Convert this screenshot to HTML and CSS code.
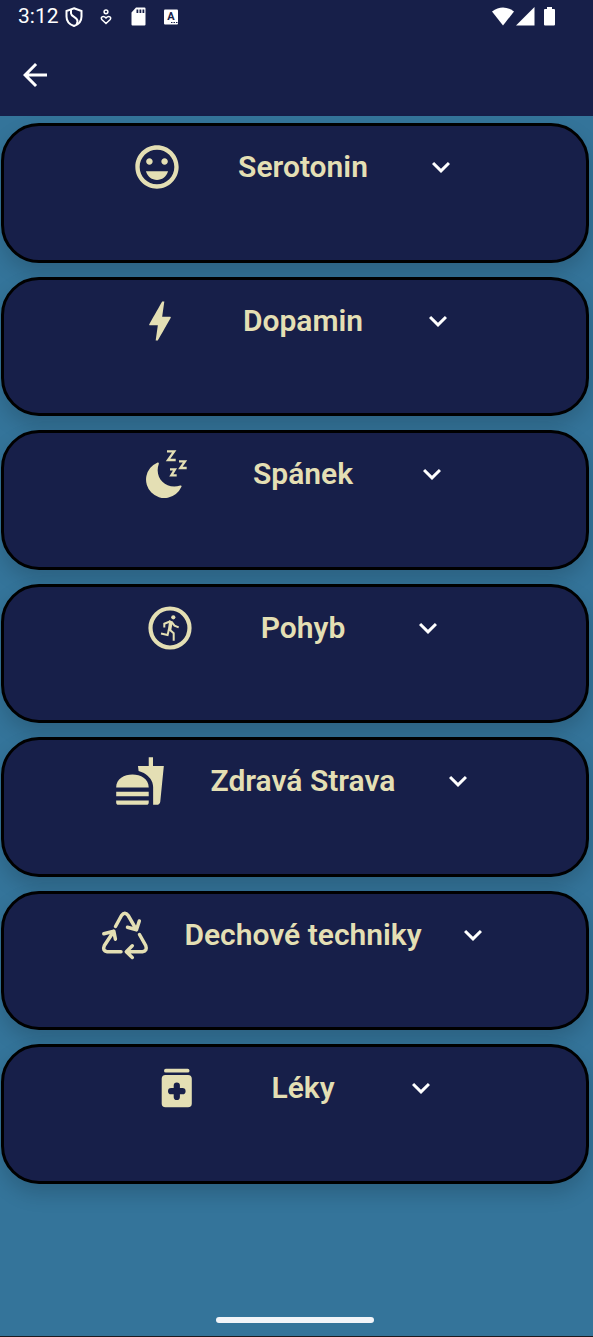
FILE: index.html
```html
<!DOCTYPE html>
<html lang="cs">
<head>
<meta charset="utf-8">
<meta name="viewport" content="width=device-width, initial-scale=1">
<title>Serotonin</title>
<link rel="stylesheet" href="styles.css">
</head>
<body>
<div class="screen">
  <header class="top">
    <div class="status">
      <span class="clock">3:12</span>
      <svg class="status-icon shield" viewBox="0 0 18 20" width="18" height="20" fill="none" stroke="currentColor" stroke-width="2"><path d="M9 1.200 16.500 4v5.500c0 4.500-3 8-7.500 9.500C4.500 17.500 1.500 14 1.500 9.500V4z"/><path d="M6 2.500v4c0 3 6.500 4 6.500 7.500 0 1.500-.5 2.500-1 3.200"/></svg>
      <svg class="status-icon person" viewBox="0 0 12 16" width="12" height="16" fill="none" stroke="currentColor" stroke-width="1.500"><circle cx="6" cy="2.800" r="1.900"/><path d="M6 14.500 1.800 10.500C.2 8.500 2.800 5.800 6 8.900c3.200-3.100 5.800-.4 4.200 1.600z"/></svg>
      <svg class="status-icon card-sd" viewBox="0 0 15 19" width="15" height="19" fill="currentColor"><path fill-rule="evenodd" d="M5 .5h8.500q1 0 1 1v16q0 1-1 1h-12q-1 0-1-1V5.500zM5.500 2.500v3.500h1.800V2.500zM8.500 2.500v3.500h1.800V2.500zM11.500 2.500v3.500h1.800V2.500z"/></svg>
      <svg class="status-icon" viewBox="0 0 14 16" width="14" height="16"><rect y=".5" width="14" height="15" rx="1" fill="currentColor"/><text class="badge-letter" x="7" y="11" text-anchor="middle">A</text><path class="badge-dots" d="M7 13.500h1.500M9.500 13.500h1.500M12 13.500h1.500"/></svg>
      <span class="signals">
        <svg viewBox="0 0 22 19" width="22" height="19" fill="currentColor"><path d="M0 4.500Q11-3.500 22 4.500L11 18.500z"/></svg>
        <svg viewBox="0 0 19 19" width="19" height="19" fill="currentColor"><path d="M18.500 0v18.500H0z"/></svg>
        <svg class="battery" viewBox="0 0 11 19" width="11" height="19" fill="currentColor"><path d="M3 0h5v2h2q1 0 1 1v14.500q0 1-1 1H1q-1 0-1-1V3q0-1 1-1h2z"/></svg>
      </span>
    </div>
    <nav class="appbar">
      <button class="icon-button" type="button" aria-label="Zpět"><svg viewBox="0 0 24 24" width="36" height="36" fill="currentColor"><path d="M20 11H7.830l5.590-5.590L12 4l-8 8 8 8 1.410-1.410L7.830 13H20v-2z"/></svg></button>
    </nav>
  </header>
  <main class="list">
    <section class="card">
      <svg class="symbol" viewBox="0 0 24 24" fill="currentColor"><path d="M11.990 2C6.470 2 2 6.480 2 12s4.470 10 9.990 10C17.520 22 22 17.520 22 12S17.520 2 11.990 2zM12 20c-4.420 0-8-3.580-8-8s3.580-8 8-8 8 3.580 8 8-3.580 8-8 8zm3.500-9c.83 0 1.500-.67 1.500-1.500S16.330 8 15.500 8 14 8.670 14 9.500s.67 1.500 1.500 1.500zm-7 0c.83 0 1.500-.67 1.500-1.500S9.330 8 8.500 8 7 8.670 7 9.500 7.670 11 8.500 11zm3.500 7c2.330 0 4.310-1.460 5.110-4H6.890c.8 2.540 2.780 4 5.110 4z"/></svg>
      <h2 class="title">Serotonin</h2>
      <button class="icon-button expand" type="button" aria-label="Rozbalit Serotonin"><svg viewBox="0 0 24 24" width="36" height="36" fill="currentColor"><path d="M16.590 8.590 12 13.170 7.410 8.590 6 10l6 6 6-6z"/></svg></button>
    </section>
    <section class="card">
      <svg class="symbol" viewBox="0 0 24 24" fill="currentColor"><path d="M11 21h-1l1-7H7.500c-.58 0-.57-.32-.38-.66.19-.34.05-.08.07-.12C8.480 10.940 10.420 7.540 13 3h1l-1 7h3.500c.49 0 .56.33.47.51l-.07.15C12.960 17.550 11 21 11 21z"/></svg>
      <h2 class="title">Dopamin</h2>
      <button class="icon-button expand" type="button" aria-label="Rozbalit Dopamin"><svg viewBox="0 0 24 24" width="36" height="36" fill="currentColor"><path d="M16.590 8.590 12 13.170 7.410 8.590 6 10l6 6 6-6z"/></svg></button>
    </section>
    <section class="card">
      <svg class="symbol" viewBox="0 0 52 52" fill="currentColor"><path d="M17.200 14.700A18.400 18.400 0 1 0 41.300 39C42 37.800 41.300 37.300 40.200 37.600 26 42 14 30 18.700 16.200 19.200 14.800 18.500 14.200 17.200 14.700z"/><path fill="none" stroke="currentColor" stroke-width="2.300" d="M27 3.300h7.200L28 12h7.700M39 13.300h6L40.300 20h6.400M30 21.300h5L31.300 27.300h5.400"/></svg>
      <h2 class="title">Spánek</h2>
      <button class="icon-button expand" type="button" aria-label="Rozbalit Spánek"><svg viewBox="0 0 24 24" width="36" height="36" fill="currentColor"><path d="M16.590 8.590 12 13.170 7.410 8.590 6 10l6 6 6-6z"/></svg></button>
    </section>
    <section class="card">
      <svg class="symbol" viewBox="0 0 52 52" fill="none" stroke="currentColor" stroke-width="2"><circle cx="26" cy="26" r="19.500" stroke-width="4.200"/><circle cx="29.300" cy="15.300" r="2.100" fill="currentColor" stroke="none"/><path fill="currentColor" stroke="none" d="M25.200 18.300 28.900 19.500 27 29.300 23.800 28.500z"/><path d="M20.300 25.500V21.700L26.500 19.300M28 20.300 30.500 23.700 34.700 25.400M25 27 23.600 33 17 31.500M25.500 27.500 29.700 31.200V38.700"/></svg>
      <h2 class="title">Pohyb</h2>
      <button class="icon-button expand" type="button" aria-label="Rozbalit Pohyb"><svg viewBox="0 0 24 24" width="36" height="36" fill="currentColor"><path d="M16.590 8.590 12 13.170 7.410 8.590 6 10l6 6 6-6z"/></svg></button>
    </section>
    <section class="card">
      <svg class="symbol" viewBox="0 0 24 24" fill="currentColor"><path d="M18.060 22.990h1.660c.84 0 1.530-.64 1.630-1.460L23 5.050h-5V1h-1.970v4.050h-4.970l.3 2.340c1.710.47 3.310 1.320 4.270 2.260 1.440 1.420 2.430 2.890 2.430 5.290v8.050zM1 21.990V21h15.030v.99c0 .55-.45 1-1.010 1H2.010c-.56 0-1.010-.45-1.010-1zm15.030-7c0-8-15.030-8-15.030 0h15.030zM1.020 17h15v2h-15z"/></svg>
      <h2 class="title">Zdravá Strava</h2>
      <button class="icon-button expand" type="button" aria-label="Rozbalit Zdravá Strava"><svg viewBox="0 0 24 24" width="36" height="36" fill="currentColor"><path d="M16.590 8.590 12 13.170 7.410 8.590 6 10l6 6 6-6z"/></svg></button>
    </section>
    <section class="card">
      <svg class="symbol" viewBox="0 0 52 52" fill="none" stroke="currentColor" stroke-width="3.500" stroke-linecap="round" stroke-linejoin="round"><path d="M16.500 17.500 22.500 6.500Q25.800 1.800 29.200 6.500L37.500 20.800M40.300 12l-2.800 8.800-9-2.500M14.800 22.200 5.400 36.500Q3 42 8.200 42.700H22M4.800 24.800l10-2.600 1.600 8M40.500 25.500 46.700 36.500Q48.700 42 43.500 42.700H27.500M33.300 36.800l-6 5.900 6 5.800"/></svg>
      <h2 class="title">Dechové techniky</h2>
      <button class="icon-button expand" type="button" aria-label="Rozbalit Dechové techniky"><svg viewBox="0 0 24 24" width="36" height="36" fill="currentColor"><path d="M16.590 8.590 12 13.170 7.410 8.590 6 10l6 6 6-6z"/></svg></button>
    </section>
    <section class="card">
      <svg class="symbol" viewBox="0 0 52 52" fill="currentColor"><rect x="13" y="6.800" width="25.500" height="3.800" rx="1.900"/><path fill-rule="evenodd" d="M14.500 13h22.500q3.800 0 3.800 3.800v24.700q0 3.800-3.800 3.800H14.500q-3.800 0-3.800-3.800V16.800q0-3.800 3.800-3.800zM22.700 23.500v2.600h-2.600a3.100 3.100 0 0 0 0 6.200h2.600v2.600a3.100 3.100 0 0 0 6.200 0v-2.600h2.600a3.100 3.100 0 0 0 0-6.200h-2.600v-2.600a3.100 3.100 0 0 0-6.200 0z"/></svg>
      <h2 class="title">Léky</h2>
      <button class="icon-button expand" type="button" aria-label="Rozbalit Léky"><svg viewBox="0 0 24 24" width="36" height="36" fill="currentColor"><path d="M16.590 8.590 12 13.170 7.410 8.590 6 10l6 6 6-6z"/></svg></button>
    </section>
  </main>
  <footer class="gesture"><div class="handle"></div></footer>
</div>
</body>
</html>
```
FILE: styles.css
```css
* {
  box-sizing: border-box;
}

body {
  margin: 0;
  font-family: Roboto, sans-serif;
  color: #fff;
  background: #34749a;
}

svg {
  display: block;
  flex: none;
}

.screen {
  display: flex;
  flex-direction: column;
  min-height: 100vh;
  border-bottom: 1px solid #1d1b20;
}

.top {
  background: #171f49;
}

.status {
  display: flex;
  align-items: center;
  height: 33px;
  padding: 0 38px 0 18px;
}

.clock {
  font-size: 21px;
  line-height: 33px;
}

.shield {
  margin-left: 6px;
}

.person {
  margin: 0 19px 0 17px;
}

.card-sd {
  margin-right: 18px;
}

.badge-letter {
  font: 700 11px Roboto, sans-serif;
  fill: #171f49;
}

.badge-dots {
  stroke: #171f49;
  stroke-width: 1;
}

.signals {
  display: flex;
  gap: 2px;
  margin-left: auto;
}

.battery {
  margin-left: 7px;
}

.appbar {
  display: flex;
  align-items: center;
  height: 83px;
  padding: 0 17px;
}

.icon-button {
  flex: none;
  width: 36px;
  height: 36px;
  padding: 0;
  border: 0;
  color: inherit;
  background: none;
  cursor: pointer;
}

.list {
  flex: 1;
  display: grid;
  grid-auto-rows: 1fr;
  gap: 14px;
  padding: 7px 4px 0 1px;
}

.card {
  display: grid;
  grid-template-columns: 3fr auto 2fr auto 2fr auto 3fr;
  align-items: center;
  align-content: start;
  padding: 15px 44px;
  min-height: 100px;
  border: 3px solid #000;
  border-radius: 38px;
  background: #171f49;
  box-shadow: 0 10px 20px rgba(0, 0, 0, 0.16);
}

.symbol {
  grid-column: 2;
  width: 52px;
  height: 52px;
  color: #e4dfb4;
}

.title {
  grid-column: 4;
  margin: 0;
  font-size: 30px;
  font-weight: 600;
  line-height: 36px;
  color: #e4dfb4;
}

.expand {
  grid-column: 6;
}

.gesture {
  display: flex;
  justify-content: center;
  padding: 133px 4px 13px 0;
}

.handle {
  width: 158px;
  height: 6px;
  border-radius: 3px;
  background: #f2f4f8;
}
```
